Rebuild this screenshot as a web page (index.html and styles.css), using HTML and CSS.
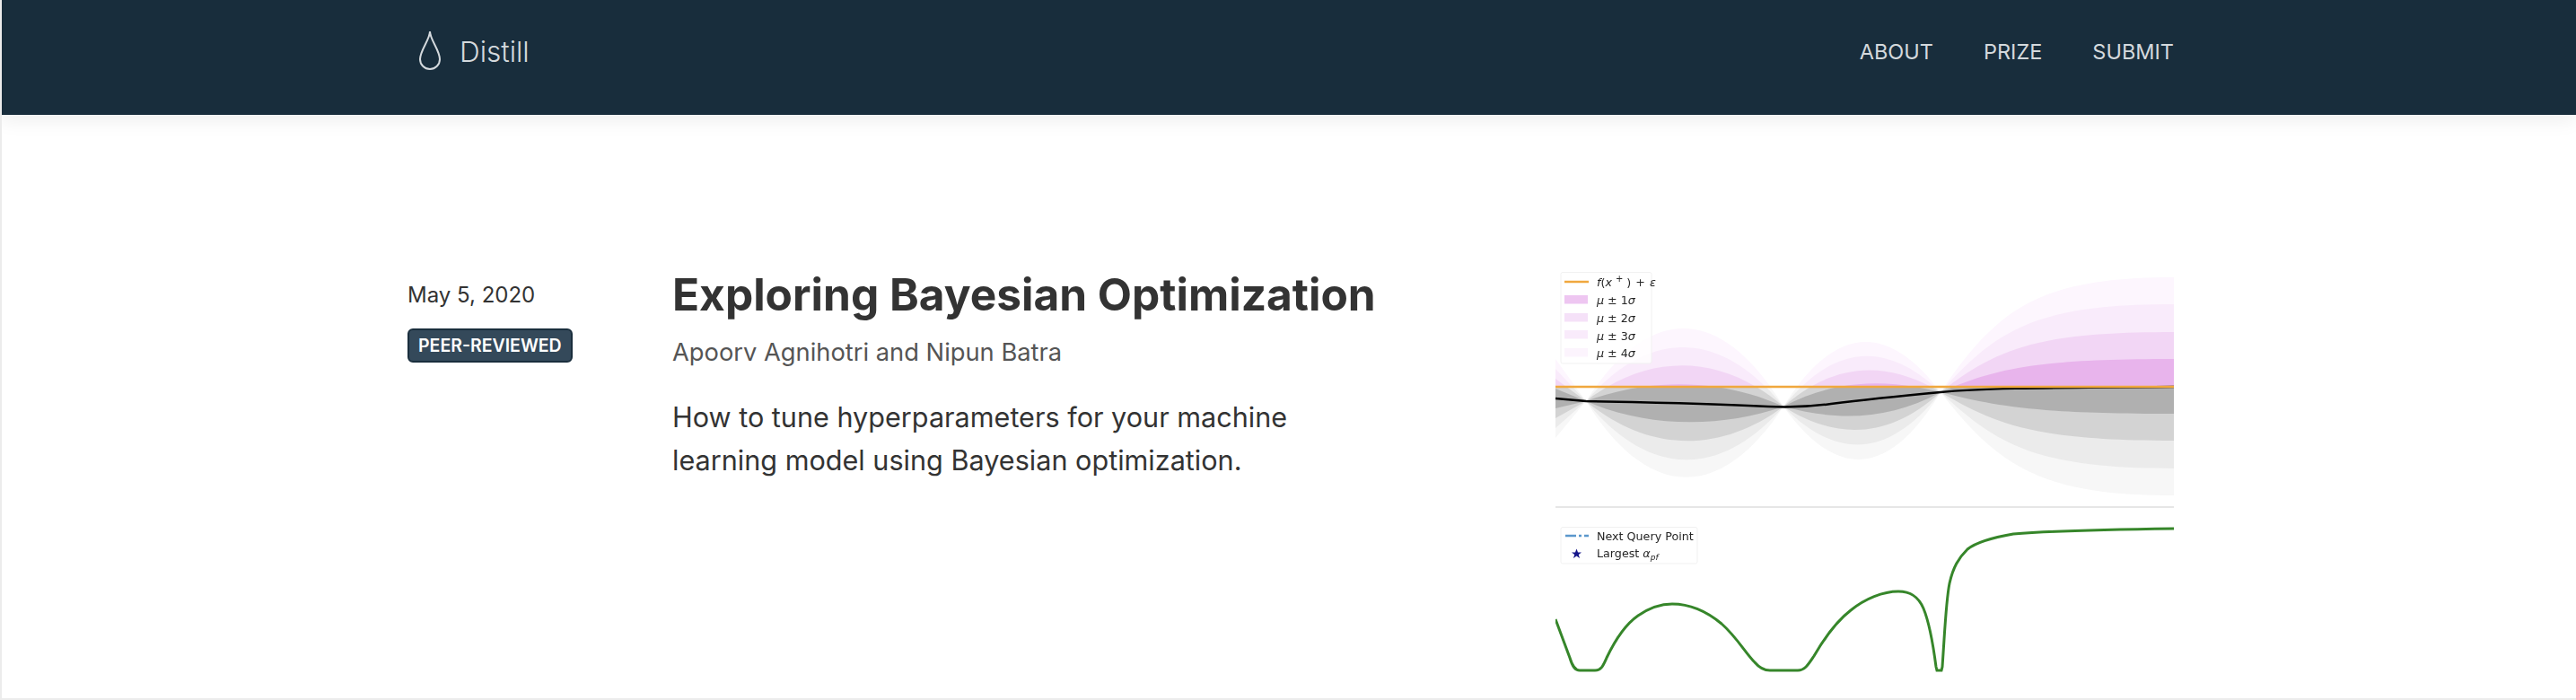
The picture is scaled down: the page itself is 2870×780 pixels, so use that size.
FILE: index.html
```html
<!DOCTYPE html>
<html>
<head>
  <title>Distill</title>
  <link rel="stylesheet" href="styles.css">
</head>
<body>
  <header class="topbar">
    <div class="container topbar-inner">
      <a class="brand" href="#">
        <svg class="brand-drop" viewBox="0 0 26 46">
          <path d="M13 1 C13 10 2 22 2 32 A11 11 0 0 0 24 32 C24 22 13 10 13 1 Z"/>
        </svg>
        <span>Distill</span>
      </a>
      <nav class="nav-links">
        <a href="#">ABOUT</a>
        <a href="#">PRIZE</a>
        <a href="#">SUBMIT</a>
      </nav>
    </div>
  </header>

  <main class="container post">
    <div class="post-meta">
      <div class="post-date">May 5, 2020</div>
      <span class="badge">PEER-REVIEWED</span>
    </div>

    <div class="post-body">
      <h1>Exploring Bayesian Optimization</h1>
      <div class="post-authors">Apoorv Agnihotri and Nipun Batra</div>
      <p class="post-desc">How to tune hyperparameters for your machine learning model using Bayesian optimization.</p>
    </div>

    <figure class="post-thumb">
      <svg viewBox="1733 300 689 480" width="689" height="480">
        <defs>
          <clipPath id="aboveBest"><rect x="1733" y="300" width="689" height="131"/></clipPath>
          <clipPath id="belowBest"><rect x="1733" y="431" width="689" height="134"/></clipPath>
          <!-- the four sigma bands, widest first -->
          <path id="band4" d="M1733 400 L1767 447 C1837 338 1917 338 1987 453 C2045 360 2104 360 2162 437 C2225 345 2270 309 2422 309 L2422 552 C2270 552 2225 517 2162 437 C2104 534 2045 534 1987 453 C1917 559 1837 559 1767 447 L1733 488 Z"/>
          <path id="band3" d="M1733 411 L1767 447 C1837 366 1917 366 1987 453 C2045 381 2104 381 2162 437 C2225 366 2270 339 2422 339 L2422 522 C2270 522 2225 496 2162 437 C2104 512 2045 512 1987 453 C1917 533 1837 533 1767 447 L1733 477 Z"/>
          <path id="band2" d="M1733 422 L1767 447 C1837 393 1917 393 1987 453 C2045 402 2104 402 2162 437 C2225 388 2270 370 2422 370 L2422 491 C2270 491 2225 474 2162 437 C2104 490 2045 490 1987 453 C1917 505 1837 505 1767 447 L1733 466 Z"/>
          <path id="band1" d="M1733 433 L1767 447 C1837 421 1917 421 1987 453 C2045 422 2104 422 2162 437 C2225 410 2270 400 2422 400 L2422 461 C2270 461 2225 453 2162 437 C2104 469 2045 469 1987 453 C1917 477 1837 477 1767 447 L1733 455 Z"/>
        </defs>

        <g clip-path="url(#aboveBest)">
          <use href="#band4" fill="#fdf6fe"/>
          <use href="#band3" fill="#f9ebfb"/>
          <use href="#band2" fill="#f2d6f5"/>
          <use href="#band1" fill="#e8b4ec"/>
        </g>
        <g clip-path="url(#belowBest)">
          <use href="#band4" fill="#f7f7f7"/>
          <use href="#band3" fill="#ebebeb"/>
          <use href="#band2" fill="#d3d3d3"/>
          <use href="#band1" fill="#b0b0b0"/>
        </g>

        <path class="mean-line" d="M1733 444 L1767 447 C1820 448 1900 449 1970 453 C1990 454 2010 454 2040 450 C2080 445 2120 441 2162 437 C2200 433 2260 432 2422 431"/>
        <line class="best-line" x1="1733" y1="431" x2="2422" y2="431"/>

        <rect class="legend-box" x="1739" y="303.5" width="101" height="101.5" rx="2"/>
        <line class="best-line" x1="1743" y1="314" x2="1770" y2="314"/>
        <rect x="1743" y="329" width="26" height="9.5" fill="#eec6f1"/>
        <rect x="1743" y="349" width="26" height="9.5" fill="#f5e1f8"/>
        <rect x="1743" y="368" width="26" height="9.5" fill="#f9ebfb"/>
        <rect x="1743" y="388" width="26" height="9.5" fill="#fcf4fd"/>
        <text class="legend-text" x="1779" y="319"><tspan class="math">f</tspan>(<tspan class="math">x</tspan><tspan dx="4" dy="-5" font-size="10">+</tspan><tspan dx="4" dy="5">)</tspan><tspan dx="5">+</tspan><tspan class="math" dx="5">ε</tspan></text>
        <text class="legend-text" x="1779" y="339"><tspan class="math">μ</tspan> ± 1<tspan class="math">σ</tspan></text>
        <text class="legend-text" x="1779" y="359"><tspan class="math">μ</tspan> ± 2<tspan class="math">σ</tspan></text>
        <text class="legend-text" x="1779" y="379"><tspan class="math">μ</tspan> ± 3<tspan class="math">σ</tspan></text>
        <text class="legend-text" x="1779" y="398"><tspan class="math">μ</tspan> ± 4<tspan class="math">σ</tspan></text>

        <line class="sep" x1="1733" y1="565" x2="2422" y2="565"/>

        <rect class="legend-box" x="1739" y="587.5" width="152" height="40.5" rx="2"/>
        <line class="query-line" x1="1744" y1="597" x2="1770" y2="597"/>
        <path d="M1756.5 611.5 L1758 615.5 L1762 615.5 L1758.8 618 L1760 622 L1756.5 619.6 L1753 622 L1754.2 618 L1751 615.5 L1755 615.5 Z" fill="#16168a"/>
        <text class="legend-text" x="1779" y="602">Next Query Point</text>
        <text class="legend-text" x="1779" y="621">Largest <tspan class="math">α</tspan><tspan class="math" dy="3" font-size="9">pf</tspan></text>

        <path class="acq-line" d="M1733 690 L1749 733 C1752 743 1755 747 1760 747 L1777 747 C1784 747 1786 742 1790 733 C1800 712 1812 695 1825 686 C1838 677 1850 673 1863 673 C1880 673 1900 680 1918 695 C1935 710 1945 728 1955 738 C1960 744 1965 747 1972 747 L2003 747 C2011 747 2015 740 2021 731 C2032 712 2045 693 2062 680 C2078 667 2098 659 2115 659 C2128 659 2137 664 2143 678 C2150 695 2154 720 2157 743 L2158 747 L2163 747 L2164 743 C2167 700 2168 670 2172 650 C2176 632 2182 622 2192 612 C2202 604 2220 599 2243 595 C2280 592 2350 590 2422 589"/>
      </svg>
    </figure>
  </main>
</body>
</html>
```

FILE: styles.css
```css
html, body {
  margin: 0;
  height: 780px;
  overflow: hidden;
}

body {
  font-family: Inter, "Noto Sans", sans-serif;
  background: #fff;
  color: #333;
  border-left: 2px solid #ececec;
  border-bottom: 2px solid #ececec;
  box-sizing: border-box;
}

a {
  color: inherit;
  text-decoration: none;
}

.container {
  width: 1968px;
  margin-left: 452px;
}

.topbar {
  height: 128px;
  margin-left: -2px;
  padding-left: 2px;
  background: #182d3c;
  color: #d4d9dd;
  box-shadow: 0 6px 20px rgba(0, 0, 0, 0.07);
}

.topbar-inner {
  height: 114px;
  display: flex;
  align-items: center;
  justify-content: space-between;
}

.brand {
  display: flex;
  align-items: center;
  gap: 20px;
  margin-left: 12px;
  font-size: 31.5px;
  font-weight: 300;
}

.brand-drop {
  width: 26px;
  height: 46px;
  fill: none;
  stroke: #d4d9dd;
  stroke-width: 2;
}

.nav-links {
  display: flex;
  gap: 56px;
  font-size: 23.5px;
}

.post {
  display: flex;
  padding-top: 170px;
}

.post-meta {
  width: 295px;
  flex: none;
}

.post-date {
  font-size: 24px;
  line-height: 32px;
  margin-top: 15px;
}

.badge {
  display: inline-block;
  margin-top: 21px;
  padding: 0 10px;
  background: #34495a;
  border: 2px solid #1a2e3d;
  border-radius: 6px;
  color: #fff;
  font-size: 19.5px;
  font-weight: 600;
  line-height: 34px;
}

.post-body {
  width: 800px;
  flex: none;
}

.post-body h1 {
  margin: 0;
  font-size: 49.6px;
  font-weight: 700;
  line-height: 60px;
}

.post-authors {
  margin-top: 17px;
  font-size: 27.3px;
  line-height: 36px;
  color: #555;
}

.post-desc {
  width: 720px;
  margin: 30px 0 0;
  font-size: 30.6px;
  line-height: 48px;
}

.post-thumb {
  margin: 0 0 0 auto;
  height: 480px;
  margin-top: 2px;
  filter: blur(0.4px);
}

.post-thumb svg {
  display: block;
}

.legend-box {
  fill: #fff;
  fill-opacity: 0.8;
  stroke: #f1f1f1;
}

.legend-text {
  font-family: "DejaVu Sans", sans-serif;
  font-size: 12.7px;
  fill: #262626;
}

.math {
  font-style: italic;
}

.mean-line {
  fill: none;
  stroke: #000;
  stroke-width: 2.5;
}

.best-line {
  stroke: #f0a83e;
  stroke-width: 2.5;
}

.sep {
  stroke: #e6e6e6;
  stroke-width: 2;
}

.query-line {
  stroke: #5b97cc;
  stroke-width: 2.5;
  stroke-dasharray: 12 3 3 3;
}

.acq-line {
  fill: none;
  stroke: #36862a;
  stroke-width: 3;
}
```
